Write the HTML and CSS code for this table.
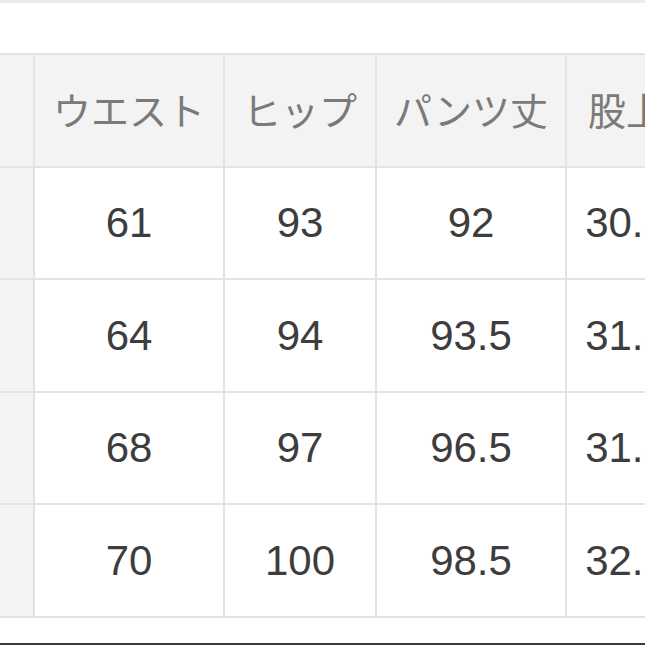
FILE: index.html
```html
<!DOCTYPE html>
<html lang="ja">
<head>
<meta charset="utf-8">
<link rel="stylesheet" href="styles.css">
</head>
<body>
<div class="page">
  <div class="topline"></div>
  <div class="spacer"></div>
  <div class="grid">
    <div class="cell side"></div>
    <div class="cell head">ウエスト</div>
    <div class="cell head">ヒップ</div>
    <div class="cell head">パンツ丈</div>
    <div class="cell head">股上</div>

    <div class="cell side"></div>
    <div class="cell num">61</div>
    <div class="cell num">93</div>
    <div class="cell num">92</div>
    <div class="cell num">30.5</div>

    <div class="cell side"></div>
    <div class="cell num">64</div>
    <div class="cell num">94</div>
    <div class="cell num">93.5</div>
    <div class="cell num">31.5</div>

    <div class="cell side"></div>
    <div class="cell num">68</div>
    <div class="cell num">97</div>
    <div class="cell num">96.5</div>
    <div class="cell num">31.5</div>

    <div class="cell side"></div>
    <div class="cell num">70</div>
    <div class="cell num">100</div>
    <div class="cell num">98.5</div>
    <div class="cell num">32.5</div>
  </div>
  <div class="gap"></div>
  <div class="bottombar"></div>
</div>
</body>
</html>
```
FILE: styles.css
```css
html, body {
  margin: 0;
  padding: 0;
  background: #ffffff;
  overflow: hidden;
}
.page {
  width: 645px;
  height: 645px;
  overflow: hidden;
  background: #ffffff;
}
.topline {
  height: 3px;
  background: #ebebeb;
}
.spacer {
  height: 50px;
}
.grid {
  display: grid;
  grid-template-columns: 35px 190px 152px 190px 120px;
  grid-template-rows: 113px 112px 113px 112px 113px;
  width: 687px;
  border-top: 2px solid #e3e3e3;
}
.cell {
  box-sizing: border-box;
  border-right: 2px solid #e3e3e3;
  border-bottom: 2px solid #e3e3e3;
  display: flex;
  align-items: center;
  justify-content: center;
  background: #ffffff;
}
.side {
  background: #f3f3f3;
}
.head {
  background: #f3f3f3;
  color: #7a7a7a;
  font-family: "Noto Sans CJK JP", "Noto Sans", sans-serif;
  font-size: 38px;
  padding-bottom: 5px;
  white-space: nowrap;
}
.num {
  color: #3d3d3d;
  font-family: "Liberation Sans", Arial, sans-serif;
  font-size: 42px;
  white-space: nowrap;
}
.gap {
  height: 25px;
}
.bottombar {
  height: 2px;
  background: #3a3a3a;
}
```
